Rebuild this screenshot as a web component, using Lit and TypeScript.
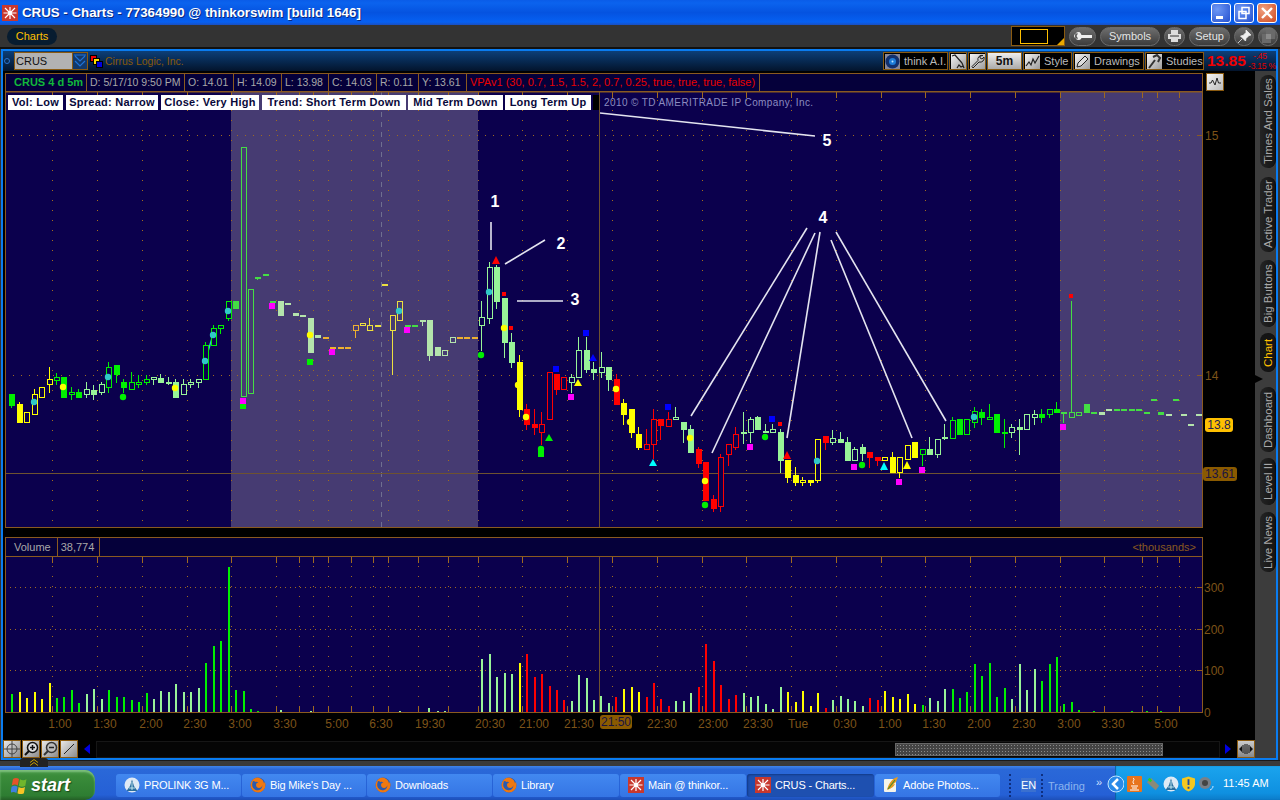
import { LitElement, html, svg, css } from "lit";
import { customElement } from "lit/decorators.js";

// left, body top, body bottom, wick top, wick bottom, kind (upper = filled, lower = hollow)
type Candle = [number, number, number, number, number, string];

const candles: Candle[] = [
  [9, 394, 406, 394, 408, "G"], [17, 404, 423, 402, 423, "Y"], [24, 412, 423, 412, 423, "y"],
  [32, 394, 415, 389, 415, "y"], [39, 387, 398, 387, 398, "y"], [47, 379, 385, 367, 393, "y"],
  [54, 377, 381, 373, 385, "g"], [61, 377, 398, 377, 398, "G"], [69, 392, 395, 387, 400, "g"],
  [76, 392, 398, 389, 398, "G"], [84, 389, 395, 382, 398, "l"], [91, 390, 395, 385, 400, "L"],
  [99, 384, 393, 382, 395, "l"], [106, 367, 388, 362, 393, "g"], [114, 365, 375, 365, 383, "G"],
  [121, 382, 388, 379, 393, "G"], [129, 382, 390, 372, 390, "g"], [136, 382, 385, 375, 388, "g"],
  [144, 379, 383, 375, 385, "g"], [151, 377, 380, 377, 385, "l"], [158, 378, 383, 374, 383, "L"],
  [166, 382, 384, 377, 385, "L"], [173, 382, 398, 379, 398, "L"], [181, 384, 395, 379, 395, "l"],
  [188, 382, 385, 379, 388, "l"], [196, 379, 383, 379, 388, "l"], [203, 345, 380, 342, 380, "g"],
  [211, 328, 346, 325, 346, "g"], [218, 325, 329, 325, 334, "g"], [226, 301, 319, 301, 321, "g"],
  [233, 301, 309, 301, 309, "G"], [241, 147, 397, 147, 397, "g"], [248, 289, 394, 289, 394, "g"],
  [255, 277, 279, 277, 280, "G"], [263, 274, 276, 274, 276, "G"], [270, 301, 303, 301, 303, "G"],
  [278, 301, 316, 301, 316, "L"], [285, 303, 305, 303, 305, "L"], [293, 313, 316, 313, 316, "L"],
  [300, 315, 317, 315, 317, "L"], [308, 318, 353, 318, 353, "L"], [315, 335, 338, 335, 338, "L"],
  [323, 337, 339, 337, 339, "O"], [330, 347, 349, 347, 349, "O"], [338, 347, 349, 347, 349, "O"],
  [345, 347, 349, 347, 349, "O"], [353, 325, 331, 325, 338, "o"], [360, 323, 326, 323, 326, "y"],
  [367, 325, 331, 318, 331, "y"], [375, 325, 327, 325, 327, "Y"], [382, 284, 286, 284, 286, "Y"],
  [390, 315, 331, 315, 375, "y"], [397, 301, 321, 301, 321, "y"], [405, 325, 327, 325, 327, "G"],
  [412, 325, 327, 325, 327, "G"], [420, 320, 322, 320, 326, "L"], [427, 320, 356, 320, 361, "L"],
  [435, 347, 356, 347, 356, "L"], [442, 350, 356, 350, 356, "l"], [450, 337, 343, 337, 343, "l"],
  [457, 337, 339, 337, 339, "O"], [464, 337, 339, 337, 339, "O"], [472, 337, 339, 337, 339, "O"],
  [479, 317, 326, 301, 351, "l"], [487, 267, 319, 262, 324, "l"], [494, 267, 302, 265, 309, "L"],
  [502, 298, 343, 298, 358, "L"], [509, 342, 363, 333, 368, "L"], [517, 362, 410, 355, 417, "Y"],
  [524, 409, 425, 404, 430, "R"], [532, 424, 428, 409, 435, "R"], [539, 424, 433, 412, 445, "r"],
  [547, 372, 420, 372, 420, "r"], [554, 374, 390, 374, 395, "R"], [561, 377, 390, 377, 390, "r"],
  [569, 377, 383, 374, 393, "l"], [576, 350, 378, 337, 378, "l"], [584, 350, 370, 337, 373, "L"],
  [591, 369, 373, 362, 380, "L"], [599, 367, 373, 352, 378, "l"], [606, 367, 380, 367, 391, "L"],
  [614, 379, 405, 374, 405, "R"], [621, 403, 415, 399, 425, "Y"], [629, 409, 433, 409, 438, "Y"],
  [636, 434, 448, 427, 450, "Y"], [644, 444, 450, 429, 450, "r"], [651, 419, 445, 409, 459, "r"],
  [658, 419, 426, 419, 440, "R"], [666, 419, 427, 412, 427, "r"], [673, 417, 420, 407, 420, "l"],
  [681, 422, 430, 422, 443, "L"], [688, 429, 453, 425, 453, "L"], [696, 449, 464, 447, 468, "R"],
  [703, 462, 501, 462, 501, "R"], [711, 499, 509, 495, 512, "R"], [718, 457, 507, 454, 512, "r"],
  [726, 444, 455, 444, 466, "r"], [733, 434, 448, 427, 450, "r"], [741, 432, 434, 412, 444, "L"],
  [748, 419, 433, 417, 443, "l"], [755, 417, 430, 416, 430, "L"], [763, 431, 433, 424, 433, "L"],
  [770, 429, 433, 424, 433, "l"], [778, 432, 461, 429, 473, "L"], [785, 460, 478, 460, 483, "Y"],
  [793, 475, 483, 467, 486, "Y"], [800, 480, 483, 477, 486, "y"], [808, 480, 483, 480, 486, "Y"],
  [815, 439, 481, 439, 483, "y"], [823, 436, 443, 436, 450, "R"], [830, 438, 443, 430, 445, "l"],
  [838, 439, 443, 432, 443, "L"], [845, 442, 461, 437, 461, "L"], [852, 449, 461, 447, 461, "l"],
  [860, 447, 454, 444, 461, "L"], [867, 452, 458, 452, 468, "R"], [875, 457, 461, 457, 466, "R"],
  [882, 457, 461, 457, 461, "y"], [890, 457, 473, 452, 473, "Y"], [897, 457, 473, 457, 478, "y"],
  [905, 445, 460, 445, 460, "y"], [912, 442, 458, 442, 458, "Y"], [920, 449, 455, 449, 466, "g"],
  [927, 449, 455, 437, 455, "L"], [935, 439, 455, 439, 458, "l"], [942, 437, 439, 424, 440, "L"],
  [950, 420, 439, 417, 439, "g"], [957, 419, 435, 419, 435, "G"], [964, 419, 435, 419, 435, "g"],
  [972, 411, 423, 407, 428, "g"], [979, 412, 418, 409, 425, "G"], [987, 417, 420, 404, 420, "g"],
  [994, 414, 433, 414, 433, "G"], [1002, 432, 434, 419, 448, "G"], [1009, 427, 433, 424, 438, "l"],
  [1017, 427, 430, 419, 455, "L"], [1024, 414, 430, 414, 430, "l"], [1032, 414, 418, 410, 425, "l"],
  [1039, 414, 418, 409, 423, "G"], [1047, 409, 415, 409, 418, "g"], [1054, 409, 413, 402, 413, "G"],
  [1061, 412, 414, 412, 423, "G"], [1069, 412, 418, 301, 418, "g"], [1076, 412, 416, 412, 416, "g"],
  [1084, 404, 413, 404, 413, "G"], [1091, 412, 414, 412, 414, "G"], [1099, 412, 415, 412, 415, "L"],
  [1106, 409, 411, 409, 411, "L"], [1114, 409, 411, 409, 411, "G"], [1121, 409, 411, 409, 411, "G"],
  [1129, 409, 411, 409, 411, "G"], [1136, 409, 411, 409, 411, "G"], [1144, 412, 414, 412, 414, "G"],
  [1151, 399, 401, 399, 401, "G"], [1158, 412, 415, 412, 415, "G"], [1166, 414, 416, 414, 416, "L"],
  [1173, 399, 401, 399, 401, "G"], [1181, 414, 416, 414, 416, "L"], [1188, 424, 426, 424, 426, "L"],
  [1196, 414, 416, 414, 416, "L"],
];

const CYAN = "#30c8c8";
const dots: [number, number, string][] = [
  [34, 402, CYAN], [63, 387, "#ffff00"], [108, 377, CYAN], [123, 397, "#00f000"], [175, 388, "#ffff00"],
  [205, 361, CYAN], [213, 335, CYAN], [228, 311, CYAN], [310, 335, "#ffff00"], [399, 311, CYAN],
  [481, 355, "#00f000"], [489, 292, CYAN], [504, 328, "#ffff00"], [518, 385, "#ffff00"],
  [526, 417, "#ffff00"], [541, 449, "#00f000"], [616, 389, "#ffff00"], [630, 422, "#ffff00"],
  [690, 438, "#ffff00"], [705, 481, "#ffff00"], [705, 505, "#00f000"], [765, 437, "#00f000"],
  [817, 461, CYAN], [862, 465, "#00f000"], [974, 417, CYAN],
];

const squares: [number, number, number, number, string][] = [
  [240, 398, 6, 6, "#ff00ff"], [240, 404, 6, 5, "#00f000"], [269, 303, 6, 6, "#ff00ff"],
  [307, 359, 6, 6, "#00f000"], [329, 349, 6, 6, "#ff00ff"], [404, 327, 6, 6, "#ff00ff"],
  [502, 292, 4, 4, "#ff0000"], [509, 326, 4, 4, "#ff0000"], [538, 450, 6, 7, "#00f000"],
  [553, 366, 6, 6, "#0000ff"], [568, 394, 6, 6, "#ff00ff"], [583, 330, 6, 6, "#0000ff"],
  [665, 404, 6, 6, "#0000ff"], [747, 444, 6, 6, "#ff00ff"], [769, 416, 6, 6, "#0000ff"],
  [778, 422, 4, 4, "#ff0000"], [851, 464, 6, 6, "#ff00ff"], [896, 479, 6, 6, "#ff00ff"],
  [919, 467, 6, 6, "#ff00ff"], [1060, 424, 6, 6, "#ff00ff"], [1069, 294, 4, 4, "#ff0000"],
];

const triangles: [number, number, number, string][] = [
  [496, 256, 264, "#ff0000"], [549, 434, 441, "#00f000"], [578, 379, 386, "#ffff00"],
  [593, 354, 361, "#0000ff"], [653, 459, 466, "#00ffff"], [787, 451, 459, "#ff0000"],
  [884, 462, 470, "#00ffff"], [907, 461, 469, "#ffff00"],
];

const notes: [number, number, number, number][] = [
  [491, 222, 491, 250], [505, 264, 545, 240], [517, 301, 563, 301], [600, 113, 815, 136],
  [807, 228, 691, 416], [815, 233, 712, 453], [820, 232, 787, 438], [831, 240, 912, 438], [836, 232, 946, 421],
];

const noteLabels: [string, number, number][] = [
  ["1", 495, 207], ["2", 561, 249], ["3", 575, 305], ["4", 823, 223], ["5", 827, 146],
];

const gridX = [52, 97, 142, 187, 231, 276, 299, 313, 328, 351, 373, 388, 418, 448, 478, 522, 567, 612, 657,
  702, 746, 791, 836, 881, 925, 970, 1015, 1060, 1104, 1142, 1157, 1179];

const timeLabels: [string, number][] = [
  ["1:00", 60], ["1:30", 105], ["2:00", 151], ["2:30", 195], ["3:00", 240], ["3:30", 285], ["5:00", 337],
  ["6:30", 381], ["19:30", 430], ["20:30", 490], ["21:00", 534], ["21:30", 579], ["22:30", 662], ["23:00", 713],
  ["23:30", 758], ["Tue", 798], ["0:30", 845], ["1:00", 890], ["1:30", 934], ["2:00", 979], ["2:30", 1024],
  ["3:00", 1069], ["3:30", 1113], ["5:00", 1166],
];

// volume bars: screen x, top y, colour key
const volumes: [number, number, string][] = [
  [11, 694, "G"], [19, 692, "Y"], [26, 698, "Y"], [34, 692, "Y"], [41, 699, "Y"], [49, 683, "Y"], [56, 698, "G"],
  [63, 697, "G"], [71, 690, "G"], [78, 703, "G"], [86, 694, "L"], [93, 689, "L"], [101, 699, "L"], [108, 690, "G"],
  [116, 697, "G"], [123, 697, "G"], [131, 700, "G"], [138, 702, "G"], [146, 693, "G"], [153, 699, "L"], [160, 691, "L"],
  [168, 692, "L"], [175, 684, "L"], [183, 692, "L"], [190, 692, "L"], [198, 688, "L"], [205, 663, "G"], [213, 646, "G"],
  [220, 641, "G"], [228, 567, "G"], [235, 690, "G"], [243, 691, "G"], [250, 709, "G"], [257, 711, "G"], [280, 710, "L"],
  [310, 711, "L"], [399, 711, "L"], [428, 708, "L"], [437, 711, "L"], [444, 711, "L"], [481, 659, "L"], [489, 654, "L"],
  [496, 677, "L"], [504, 673, "L"], [511, 674, "L"], [519, 663, "Y"], [526, 654, "R"], [534, 677, "R"], [541, 674, "R"],
  [549, 686, "R"], [556, 690, "R"], [563, 700, "R"], [571, 701, "L"], [578, 675, "L"], [586, 678, "L"], [593, 700, "L"],
  [600, 696, "L"], [608, 703, "L"], [615, 697, "R"], [623, 689, "Y"], [631, 687, "Y"], [638, 692, "Y"], [646, 697, "R"],
  [653, 683, "R"], [660, 699, "R"], [668, 706, "R"], [675, 701, "L"], [683, 701, "L"], [690, 693, "L"], [698, 687, "R"],
  [705, 644, "R"], [713, 661, "R"], [720, 685, "R"], [728, 699, "R"], [735, 695, "R"], [743, 693, "L"], [750, 697, "L"],
  [757, 696, "L"], [765, 704, "L"], [772, 709, "L"], [780, 687, "L"], [787, 692, "Y"], [795, 702, "Y"], [802, 691, "Y"],
  [810, 706, "Y"], [817, 693, "Y"], [825, 708, "R"], [832, 700, "L"], [840, 696, "L"], [847, 699, "L"], [854, 701, "L"],
  [862, 706, "L"], [869, 698, "R"], [877, 700, "R"], [884, 691, "Y"], [892, 697, "Y"], [899, 699, "Y"], [907, 694, "Y"],
  [914, 704, "Y"], [922, 705, "G"], [929, 698, "L"], [937, 701, "L"], [944, 689, "L"], [952, 689, "G"], [959, 698, "G"],
  [966, 692, "G"], [974, 664, "G"], [981, 676, "G"], [989, 663, "G"], [996, 697, "G"], [1004, 688, "G"], [1011, 699, "L"],
  [1019, 664, "L"], [1026, 690, "L"], [1034, 669, "L"], [1041, 681, "G"], [1049, 664, "G"], [1056, 657, "G"],
  [1063, 704, "G"], [1071, 702, "G"], [1078, 710, "G"], [1093, 711, "G"], [1131, 711, "G"], [1146, 711, "G"], [1160, 711, "G"],
];

const tabs: [string, number, number][] = [
  ["Times And Sales", 4, 93], ["Active Trader", 9, 75], ["Big Buttons", 8, 67], ["Chart", 6, 39],
  ["Dashboard", 15, 65], ["Level II", 6, 47], ["Live News", 7, 60],
];

const vpaLabels: [string, number][] = [
  ["Vol: Low", 55], ["Spread: Narrow", 92], ["Close: Very High", 98],
  ["Trend: Short Term Down", 144], ["Mid Term Down", 95], ["Long Term Up", 86],
];

const quotes: [string, number][] = [
  ["D: 5/17/10 9:50 PM", 98], ["O: 14.01", 49], ["H: 14.09", 48], ["L: 13.98", 47],
  ["C: 14.03", 48], ["R: 0.11", 42], ["Y: 13.61", 48],
];

function inShade(x: number) {
  return (x >= 231 && x < 478) || x >= 1060;
}

function colourFor(kind: string, x: number) {
  const k = kind.toUpperCase();
  const shaded = inShade(x);
  if (k === "G") return shaded ? "#44dd44" : "#00f000";
  if (k === "L") return shaded ? "#b4e4ac" : "#98f498";
  if (k === "Y") return shaded ? "#ece040" : "#ffff00";
  if (k === "O") return "#eeb030";
  return "#ff0000";
}

function candleMark([x, top, bottom, wt, wb, kind]: Candle) {
  const c = colourFor(kind, x);
  const hollow = kind === kind.toLowerCase();
  return svg`
    <line x1=${x + 2.5} x2=${x + 2.5} y1=${wt} y2=${wb} stroke=${c} />
    ${hollow
      ? svg`<rect x=${x + 0.5} y=${top + 0.5} width="5" height=${bottom - top - 1} fill=${inShade(x) ? "#463b72" : "#0b004d"} stroke=${c} />`
      : svg`<rect x=${x} y=${top} width="6" height=${bottom - top} fill=${c} />`}
  `;
}

const tosIcon = svg`
  <rect x="0" y="0" width="16" height="16" fill="#c8382e" />
  <path d="M8 2v12M3 3l10 10M13 3L3 13M1.500 8h13" stroke="#fff" stroke-width="1.200" />
  <circle cx="8" cy="8" r="2" fill="#fff" />`;

const firefoxIcon = svg`
  <circle cx="8" cy="8" r="7.500" fill="#2a5ab0" />
  <path d="M8 .5a7.500 7.500 0 1 0 7.500 7.500c0-1.200-.3-2.300-.8-3.300-.2 1.300-.8 1.800-.8 1.800C13.800 4 12 1.500 8 .5zM3 4c1 .1 1.800.5 2.500 1 1-.3 2-.2 3 .5-1.500 0-2.500 1-2.500 2.500 0 1.800 1.500 3 3 3 1.800 0 3-1.300 3.300-2.800.3 2.800-1.800 5-4.800 5-3.200 0-5.300-2.500-5.300-5.200 0-1.500.4-3 .8-4z" fill="#f07810" />`;

const prolinkIcon = svg`
  <circle cx="8" cy="8" r="7.500" fill="#dfeaf5" />
  <path d="M8 2.500L10 9l3.500 5h-11L6 9z" fill="#2a6d9e" />
  <path d="M8 5v8M5 11h6" stroke="#dff" stroke-width=".8" />`;

const photoshopIcon = svg`
  <rect x="1" y="2" width="12" height="13" rx="1" fill="#f4f4ea" />
  <path d="M15 0C10 1 6 5 4 13c3-1 7-3 8-6l-2 .5L13 5z" fill="#e69a20" />
  <path d="M12 3L5 12" stroke="#4a8a2c" stroke-width="1.200" />`;

const windowsFlag = svg`
  <path d="M2 3c2-1.500 4-1.500 6 0l-1.200 6.500c-2-1.400-4-1.400-6 0z" fill="#e5532a" />
  <path d="M9 3.300c2 1.300 4 1.300 6.500 0L14.300 9.800c-2.300 1.300-4.500 1.300-6.500 0z" fill="#6fb62c" />
  <path d="M.6 10.800c2-1.400 4-1.400 6 0L5.400 17c-2-1.400-4-1.400-6 0z" fill="#3f80e0" />
  <path d="M7.600 11c2 1.300 4.300 1.300 6.400 0l-1.100 6.200c-2.200 1.300-4.400 1.300-6.400 0z" fill="#f7c325" />`;

@customElement("app-root")
export class AppRoot extends LitElement {
  static override styles = css`
    :host {
      display: flex;
      flex-direction: column;
      position: relative;
      width: 1280px;
      height: 800px;
      overflow: hidden;
      background: #333;
      font-family: "Liberation Sans", Arial, sans-serif;
    }

    svg { display: block; }

    .title-bar {
      height: 25px;
      flex: none;
      display: flex;
      align-items: center;
      padding: 0 3px 0 2px;
      background: linear-gradient(#0a5ce8 0%, #0b63ee 12%, #0553e0 50%, #0660f2 88%, #1a4fc0 100%);
      color: #fff;
      font: bold 13.3px "Liberation Sans", sans-serif;
      text-shadow: 1px 1px 0 #0a2a80;
    }
    .title-text { flex: 1; margin-left: 4px; }
    .win-btn {
      width: 20px;
      height: 20px;
      box-sizing: border-box;
      margin-left: 3px;
      border: 1px solid #fff;
      border-radius: 3px;
      background: radial-gradient(circle at 30% 30%, #6e98f5, #2450d0);
    }
    .win-btn.close { background: radial-gradient(circle at 30% 30%, #f0a080, #d04a20); }

    .menu-bar {
      height: 22px;
      flex: none;
      display: flex;
      align-items: center;
      padding: 0 2px 0 7px;
      background: #333;
    }
    .charts-pill {
      width: 50px;
      height: 17px;
      border-radius: 9px;
      background: #071c30;
      color: #ffc000;
      font-size: 11px;
      line-height: 17px;
      text-align: center;
    }
    .menu-fill { flex: 1; }
    .color-box {
      position: relative;
      width: 52px;
      height: 18px;
      margin-right: 4px;
      background: #000;
      border: 1px solid #8a5a10;
    }
    .color-box i {
      position: absolute;
      left: 8px;
      top: 2px;
      width: 26px;
      height: 13px;
      border: 1px solid #ffc000;
    }
    .color-box b {
      position: absolute;
      right: 0;
      bottom: 0;
      border-style: solid;
      border-width: 0 0 7px 7px;
      border-color: transparent transparent #e8a800 transparent;
    }
    .pill {
      height: 17px;
      margin-right: 4px;
      border: 1px solid #6c6c6c;
      border-radius: 10px;
      background: linear-gradient(#6e6e6e, #3c3c3c);
      color: #e4e4e4;
      font-size: 11px;
      line-height: 17px;
      text-align: center;
      display: flex;
      align-items: center;
      justify-content: center;
      box-sizing: content-box;
    }
    .pill.last { margin-right: 0; }

    .black-line { height: 2px; flex: none; background: #111; }

    .panel {
      height: 707px;
      flex: none;
      margin: 0 2px 0 1px;
      border: 2px solid #0a7cf0;
      display: flex;
      flex-direction: column;
      background: #000;
    }
    .panel-head {
      height: 20px;
      flex: none;
      display: flex;
      align-items: center;
      background: linear-gradient(#0c3f78, #03142c);
    }
    .live-dot {
      width: 4px;
      height: 4px;
      margin: 0 4px 0 1px;
      border: 1px solid #2a74d0;
      border-radius: 50%;
    }
    .symbol {
      width: 56px;
      height: 16px;
      border: 1px solid #8a5a10;
      background: #b2b2b2;
      color: #111;
      font-size: 11px;
      line-height: 16px;
      padding-left: 1px;
      box-sizing: content-box;
    }
    .symbol-drop {
      width: 14px;
      height: 16px;
      border: 1px solid #8a5a10;
      border-left: none;
      background: #12386a;
      margin-right: 2px;
    }
    .company { flex: 1; margin-left: 2px; color: #8a5a0a; font-size: 10.5px; }
    .tools { display: flex; height: 18px; }
    .tool {
      display: flex;
      align-items: center;
      gap: 4px;
      box-sizing: border-box;
      height: 18px;
      margin-right: 1px;
      padding: 0 1px;
      border: 1px solid #8a5a10;
      background: #000;
      color: #bbb;
      font-size: 11px;
      white-space: nowrap;
    }
    .glyph {
      width: 15px;
      height: 15px;
      flex: none;
      background: linear-gradient(135deg, #f4f4f4, #9c9c9c);
    }
    .tool.fivem {
      justify-content: center;
      background: linear-gradient(#eee, #aaa);
      color: #111;
      font-weight: bold;
      font-size: 12px;
    }
    .last-price {
      width: 41px;
      margin-left: 3px;
      color: #f00000;
      font-size: 15.5px;
      font-weight: bold;
      white-space: nowrap;
    }
    .change {
      width: 28px;
      color: #e00000;
      font-size: 8.5px;
      letter-spacing: -0.2px;
      line-height: 10px;
      white-space: nowrap;
    }

    .panel-body { flex: 1; display: flex; min-height: 0; }
    .chart-col { width: 1252px; flex: none; display: flex; flex-direction: column; }

    .info-row { display: flex; height: 19px; flex: none; margin: 2px 0 0 2px; }
    .info {
      width: 1198px;
      display: flex;
      box-sizing: border-box;
      height: 19px;
      border: 1px solid #8a5a20;
      background: #05003a;
      color: #a8a8a8;
      font-size: 10.5px;
      line-height: 17px;
    }
    .info span { box-sizing: border-box; padding-left: 3px; border-right: 1px solid #8a5a20; white-space: nowrap; }
    .info .sym { width: 81px; color: #12b83a; font-weight: bold; font-size: 11px; padding-left: 8px; }
    .info .study { width: 293px; color: #e80000; font-size: 11px; border-right: 1px solid #8a5a20; }
    .chart-toggle {
      width: 16px;
      height: 16px;
      margin: 0 0 0 3px;
      border: 1px solid #8a5a10;
      padding: 0;
      background: linear-gradient(135deg, #f4f4f4, #bbb);
    }

    .price-wrap { position: relative; margin-left: 2px; height: 436px; flex: none; }
    .overlay {
      position: absolute;
      left: 3px;
      top: 3px;
      display: flex;
      align-items: center;
      height: 15px;
    }
    .tag {
      height: 15px;
      margin-right: 3px;
      background: #fff;
      color: #08083a;
      font-size: 11px;
      font-weight: bold;
      line-height: 15px;
      text-align: center;
      letter-spacing: 0.25px;
      white-space: nowrap;
    }
    .tag.tight { margin-right: 2px; }
    .tag-end { width: 6px; height: 15px; margin: 0 5px 0 -1px; background: #000; }
    .copyright { color: #8c8cc0; font-size: 10px; letter-spacing: 0.4px; white-space: nowrap; }

    .vol-head {
      position: relative;
      width: 1198px;
      height: 20px;
      margin: 9px 0 0 2px;
      box-sizing: border-box;
      flex: none;
      display: flex;
      border: 1px solid #8a5a20;
      background: #05003a;
      color: #a8a8a8;
      font-size: 11px;
      line-height: 18px;
    }
    .vol-head span { padding: 0 6px 0 8px; border-right: 1px solid #8a5a20; }
    .vol-head span + span { padding: 0 5px 0 3px; }
    .vol-head em {
      margin-left: auto;
      padding-right: 6px;
      color: #8a5a20;
      font-style: normal;
    }
    .vol-wrap { margin-left: 2px; height: 178px; flex: none; }

    .scroll-row { display: flex; align-items: center; height: 18px; margin-top: 5px; flex: none; }
    .sq-btn {
      width: 16px;
      height: 16px;
      margin-right: 1px;
      flex: none;
      border: 1px solid #8a5a10;
      background: linear-gradient(135deg, #e8e8e8, #8c8c8c);
    }
    .arrow { width: 6px; height: 10px; margin: 0 6px 0 5px; flex: none; }
    .track {
      position: relative;
      flex: 1;
      height: 15px;
      background: #050505;
      border: 1px solid #161616;
    }
    .thumb {
      position: absolute;
      left: 798px;
      top: 1px;
      width: 268px;
      height: 13px;
      border: 1px solid #666;
      box-sizing: border-box;
      background: #444;
      background-image: radial-gradient(#8a8a8a 0.7px, transparent 0.8px);
      background-size: 3px 3px;
    }

    .tab-strip {
      position: relative;
      width: 21px;
      flex: none;
      display: flex;
      flex-direction: column;
      align-items: flex-end;
      background: #3c3c3c;
    }
    .side-tab {
      width: 16px;
      box-sizing: border-box;
      border-radius: 8px;
      background: linear-gradient(90deg, #141414, #242424);
      border-left: 1px solid #0c0c0c;
      color: #a8a8a8;
      font-size: 11.5px;
      display: flex;
      align-items: center;
      justify-content: center;
      writing-mode: vertical-rl;
      transform: rotate(180deg);
      white-space: nowrap;
    }
    .side-tab.active { color: #ffc000; background: #141414; }
    .notch {
      position: absolute;
      left: 0;
      top: 304px;
      border-style: solid;
      border-width: 4px 0 4px 8px;
      border-color: transparent transparent transparent #000;
    }

    .under-panel { position: relative; height: 6px; flex: none; background: #3a3a3a; border-top: 1px solid #1a1a1a; box-sizing: border-box; }
    .handle {
      position: absolute;
      left: 20px;
      top: -3px;
      width: 28px;
      height: 9px;
      border-radius: 3px 3px 0 0;
      background: #222;
    }
    .handle svg { margin: 1px auto 0; }

    .taskbar {
      height: 34px;
      flex: none;
      display: flex;
      align-items: flex-end;
      background: linear-gradient(#3f84ea 0%, #2a68d8 10%, #2560d6 85%, #1d4fb8 100%);
      color: #fff;
      font-size: 11px;
    }
    .start {
      width: 95px;
      height: 30px;
      flex: none;
      display: flex;
      align-items: center;
      gap: 4px;
      box-sizing: border-box;
      padding-left: 11px;
      border-radius: 0 10px 10px 0;
      background: linear-gradient(#4a9a4a, #3a8c3a 20%, #2e7d32 85%, #245f26);
      box-shadow: inset 0 2px 2px #7ec07e;
      font-size: 18px;
      font-style: italic;
      font-weight: bold;
      text-shadow: 1px 1px 1px #1a4a1a;
    }
    .grip { width: 3px; height: 23px; margin: 0 0 3px; flex: none; border-left: 2px dotted #0e2f80; box-sizing: border-box; }
    .tasks { display: flex; height: 30px; align-items: center; margin-left: 21px; }
    .task {
      display: flex;
      align-items: center;
      gap: 4px;
      box-sizing: border-box;
      height: 23px;
      margin-right: 1px;
      padding-left: 8px;
      border-radius: 3px;
      background: linear-gradient(#4288f0, #3575e4);
      letter-spacing: -0.15px;
      white-space: nowrap;
      overflow: hidden;
    }
    .task.active { background: #1e50b0; box-shadow: inset 1px 1px 2px #123a88; }
    .lang { width: 15px; margin: 0 0 8px 9px; background: #3a70d0; font-size: 11px; line-height: 14px; text-align: center; }
    .toolbar-name { width: 36px; margin: 0 0 8px 4px; color: #8cb4ee; font-size: 11px; }
    .more { margin: 0 0 12px 12px; color: #cfe0ff; font-size: 11px; width: 19px; }
    .tray {
      flex: 1;
      height: 34px;
      display: flex;
      align-items: center;
      gap: 3px;
      background: linear-gradient(#1aa4ee, #0f90e0 80%, #0c7bc8);
      box-shadow: inset 1px 0 1px #0b5fa0;
      font-size: 11px;
    }
    .tray .clock { margin-left: 6px; white-space: nowrap; }
    .tray svg { margin-top: 2px; flex: none; }
  `;

  renderPrice() {
    return svg`
      <rect x="5" y="92" width="1198" height="436" fill="#0b004d" />
      <rect x="231" y="92" width="247" height="435" fill="#463b72" />
      <rect x="1060" y="92" width="143" height="435" fill="#463b72" />
      <g stroke="#a06a20" shape-rendering="crispEdges">
        ${gridX.map((x) => svg`<line x1=${x + 0.5} x2=${x + 0.5} y1="92" y2="98" />
          <line x1=${x + 0.5} x2=${x + 0.5} y1="100" y2="527" stroke-dasharray="1 9" />`)}
        <line x1="5" x2="1203" y1="135.500" y2="135.500" stroke-dasharray="1 7" />
        <line x1="5" x2="1203" y1="375.500" y2="375.500" stroke-dasharray="1 7" />
      </g>
      <line x1="381.500" x2="381.500" y1="92" y2="527" stroke="#6f6f90" stroke-dasharray="5 5" />
      <g stroke="#6e5230" shape-rendering="crispEdges">
        <line x1="5" x2="1203" y1="473.500" y2="473.500" />
        <line x1="599.500" x2="599.500" y1="92" y2="527" />
      </g>
      <line x1="205" y1="361" x2="213" y2="335" stroke=${CYAN} stroke-width="1.500" />
      <g shape-rendering="crispEdges">${candles.map(candleMark)}</g>
      ${dots.map(([x, y, c]) => svg`<circle cx=${x} cy=${y} r="3.200" fill=${c} />`)}
      <g shape-rendering="crispEdges">
        ${squares.map(([x, y, w, h, c]) => svg`<rect x=${x} y=${y} width=${w} height=${h} fill=${c} />`)}
      </g>
      ${triangles.map(([x, t, b, c]) => svg`<path d="M${x} ${t}L${x + 4} ${b}H${x - 4}z" fill=${c} />`)}
      ${notes.map(([a, b, c, d]) => svg`<line x1=${a} y1=${b} x2=${c} y2=${d} stroke="#e4e4f0" stroke-width="1.600" />`)}
      ${noteLabels.map(([t, x, y]) => svg`<text x=${x} y=${y} text-anchor="middle" fill="#fff" font-size="16" font-weight="bold">${t}</text>`)}
      <rect x="5.500" y="92" width="1197" height="435.500" fill="none" stroke="#8a5a20" />
      <g stroke="#8a5a20" shape-rendering="crispEdges">
        <line x1="1197" x2="1203" y1="135.500" y2="135.500" />
        <line x1="1197" x2="1203" y1="375.500" y2="375.500" />
      </g>
      <g fill="#7d5318" font-size="12">
        <text x="1205" y="140">15</text>
        <text x="1205" y="380">14</text>
      </g>
      <rect x="1205" y="418" width="28" height="14" rx="3" fill="#ffc000" />
      <text x="1219" y="429" text-anchor="middle" font-size="12" fill="#222050">13.8</text>
      <rect x="1203" y="467" width="34" height="14" rx="3" fill="#8a5a00" />
      <text x="1220" y="478" text-anchor="middle" font-size="12" fill="#1a1440">13.61</text>
    `;
  }

  renderVolume() {
    return svg`
      <rect x="5" y="557" width="1198" height="155" fill="#0b004d" />
      <g stroke="#a06a20" shape-rendering="crispEdges">
        ${gridX.map((x) => svg`<line x1=${x + 0.5} x2=${x + 0.5} y1="557" y2="563" />
          <line x1=${x + 0.5} x2=${x + 0.5} y1="566" y2="707" stroke-dasharray="1 9" />
          <line x1=${x + 0.5} x2=${x + 0.5} y1="707" y2="712" />`)}
        <line x1="5" x2="1197" y1="587.500" y2="587.500" stroke-dasharray="1 4" />
        <line x1="5" x2="1197" y1="629.500" y2="629.500" stroke-dasharray="1 4" />
        <line x1="5" x2="1197" y1="670.500" y2="670.500" stroke-dasharray="1 4" />
      </g>
      <line x1="599.500" x2="599.500" y1="557" y2="712" stroke="#6e5230" shape-rendering="crispEdges" />
      <g shape-rendering="crispEdges">
        ${volumes.map(([x, y, k]) => svg`<rect x=${x} y=${y} width="2" height=${712 - y} fill=${colourFor(k, 500)} />`)}
      </g>
      <path d="M5.500 557V712.500H1202.500V557" fill="none" stroke="#8a5a20" shape-rendering="crispEdges" />
      <g stroke="#8a5a20" shape-rendering="crispEdges">
        <line x1="1197" x2="1203" y1="587.500" y2="587.500" />
        <line x1="1197" x2="1203" y1="629.500" y2="629.500" />
        <line x1="1197" x2="1203" y1="670.500" y2="670.500" />
      </g>
      <g fill="#7d5318" font-size="12">
        <text x="1204" y="592">300</text>
        <text x="1204" y="634">200</text>
        <text x="1204" y="675">100</text>
        <text x="1204" y="717">0</text>
        ${timeLabels.map(([t, x]) => svg`<text x=${x} y="728" text-anchor="middle">${t}</text>`)}
      </g>
      <rect x="600" y="715" width="32" height="14" rx="3" fill="#8a5a00" />
      <text x="616" y="726" text-anchor="middle" font-size="12" fill="#1a1440">21:50</text>
    `;
  }

  renderTitle() {
    return html`
      <div class="title-bar">
        <svg width="16" height="16" viewBox="0 0 16 16">${tosIcon}</svg>
        <div class="title-text">CRUS - Charts - 77364990 @ thinkorswim [build 1646]</div>
        <div class="win-btn">
          <svg width="18" height="18" viewBox="0 0 18 18"><rect x="4" y="12" width="7" height="3" fill="#fff" /></svg>
        </div>
        <div class="win-btn">
          <svg width="18" height="18" viewBox="0 0 18 18">
            <path d="M7 3.500h7v6h-7zM4 7.500h7v7H4z" fill="none" stroke="#fff" stroke-width="1.500" />
          </svg>
        </div>
        <div class="win-btn close">
          <svg width="18" height="18" viewBox="0 0 18 18">
            <path d="M4 4l10 10M14 4L4 14" stroke="#fff" stroke-width="2.400" />
          </svg>
        </div>
      </div>
    `;
  }

  renderMenu() {
    return html`
      <div class="menu-bar">
        <div class="charts-pill">Charts</div>
        <div class="menu-fill"></div>
        <div class="color-box"><i></i><b></b></div>
        <div class="pill" style="width:25px">
          <svg width="20" height="10" viewBox="0 0 20 10">
            <path d="M6 1a4 4 0 1 0 0 8c1 0 2-.8 2.500-2H19V4H8.500C8 2.500 7 1 6 1zM1 5a3 3 0 0 1 4-2.500L3.500 5 5 7.500A3 3 0 0 1 1 5z" fill="#eee" fill-rule="evenodd" />
          </svg>
        </div>
        <div class="pill" style="width:58px">Symbols</div>
        <div class="pill" style="width:19px">
          <svg width="13" height="12" viewBox="0 0 13 12">
            <path d="M3 0h7v4H3zM0 4h13v5H0zM3 8h7v4H3z" fill="#ddd" />
            <path d="M2 6h9" stroke="#333" />
          </svg>
        </div>
        <div class="pill" style="width:39px">Setup</div>
        <div class="pill" style="width:18px">
          <svg width="13" height="13" viewBox="0 0 13 13">
            <path d="M8 0l5 5-2 .5-3 3-.5 2.500L2.500 6 5 5.500l3-3zM4 9l-4 4" fill="#eee" stroke="#eee" stroke-width=".8" />
          </svg>
        </div>
        <div class="pill last" style="width:18px">
          <svg width="13" height="13" viewBox="0 0 13 13">
            <path d="M4 0h9v9H9v4H0V4h4z" fill="#6a6a6a" />
            <path d="M4 4h5v5H4z" fill="#8a8a8a" />
          </svg>
        </div>
      </div>
    `;
  }

  renderHead() {
    return html`
      <div class="panel-head">
        <div class="live-dot"></div>
        <div class="symbol">CRUS</div>
        <div class="symbol-drop">
          <svg width="14" height="16" viewBox="0 0 14 16">
            <path d="M1 2h12M2 3l5 5 5-5M2 8l5 5 5-5" fill="none" stroke="#1e72d8" stroke-width="1.200" />
          </svg>
        </div>
        <svg width="13" height="13" viewBox="0 0 13 13">
          <rect x=".5" y=".5" width="6" height="6" fill="#f00000" stroke="#000" />
          <rect x="3.500" y="3.500" width="6" height="6" fill="#ffe000" stroke="#000" />
          <rect x="6.500" y="6.500" width="6" height="6" fill="#0000e0" stroke="#000" />
        </svg>
        <div class="company">Cirrus Logic, Inc.</div>
        <div class="tools">
          <div class="tool" style="width:65px">
            <svg class="glyph" viewBox="0 0 15 15">
              <rect width="15" height="15" fill="#889" />
              <circle cx="7.500" cy="7.500" r="7" fill="#12306e" />
              <circle cx="7.500" cy="7.500" r="3.500" fill="#1e7cd8" />
              <circle cx="7.500" cy="7.500" r="1" fill="#bfe6ff" />
            </svg>
            think A.I.
          </div>
          <div class="tool" style="width:18px">
            <svg class="glyph" viewBox="0 0 15 15">
              <path d="M1 2l3-1 7 8M6 14l2-3 2 2 2-1 1 2-2-5" fill="none" stroke="#222" stroke-width="1.200" />
            </svg>
          </div>
          <div class="tool" style="width:18px">
            <svg class="glyph" viewBox="0 0 15 15">
              <path d="M13 1.500a4 4 0 0 0-5 5L2 12.500 3 14l6-6a4 4 0 0 0 5-5l-2 2-2-1V2z" fill="none" stroke="#222" />
            </svg>
          </div>
          <div class="tool fivem" style="width:35px">5m</div>
          <div class="tool" style="width:49px">
            <svg class="glyph" viewBox="0 0 15 15">
              <path d="M1 12l3-4 2 3 2-6 2 4 4-7" fill="none" stroke="#222" stroke-width="1.200" />
            </svg>
            Style
          </div>
          <div class="tool" style="width:71px">
            <svg class="glyph" viewBox="0 0 15 15">
              <path d="M2 13l1-4 7-7 3 3-7 7z" fill="#ddd" stroke="#222" />
            </svg>
            Drawings
          </div>
          <div class="tool" style="width:59px;margin-right:0">
            <svg class="glyph" viewBox="0 0 15 15">
              <path d="M2 14l6-8M6 3l4-2 3 3-2 4" fill="none" stroke="#333" stroke-width="2" />
            </svg>
            Studies
          </div>
        </div>
        <div class="last-price">13.85</div>
        <div class="change"><div style="margin-left:5px">-.45</div><div>-3.15 %</div></div>
      </div>
    `;
  }

  renderChart() {
    return html`
      <div class="chart-col">
        <div class="info-row">
          <div class="info">
            <span class="sym">CRUS 4 d 5m</span>
            ${quotes.map(([t, w]) => html`<span style="width:${w}px">${t}</span>`)}
            <span class="study">VPAv1 (30, 0.7, 1.5, 1.5, 2, 0.7, 0.25, true, true, true, false)</span>
          </div>
          <div class="chart-toggle">
            <svg width="16" height="16" viewBox="0 0 16 16">
              <path d="M2 9h2l1.500-3L8 11l2-7 1.500 5H14" fill="none" stroke="#222" />
            </svg>
          </div>
        </div>
        <div class="price-wrap">
          <svg width="1250" height="436" viewBox="5 92 1250 436">${this.renderPrice()}</svg>
          <div class="overlay">
            ${vpaLabels.map(([t, w], i) => html`<div class="tag ${i > 2 && i < 5 ? "tight" : ""}" style="width:${w}px">${t}</div>`)}
            <div class="tag-end"></div>
            <div class="copyright">2010 © TD AMERITRADE IP Company, Inc.</div>
          </div>
        </div>
        <div class="vol-head">
          <span>Volume</span><span>38,774</span>
          <em>&lt;thousands&gt;</em>
        </div>
        <div class="vol-wrap">
          <svg width="1250" height="178" viewBox="5 557 1250 178">${this.renderVolume()}</svg>
        </div>
        <div class="scroll-row">
          <div class="sq-btn">
            <svg width="16" height="16" viewBox="0 0 16 16">
              <circle cx="8" cy="8" r="5" fill="none" stroke="#444" />
              <path d="M8 0v16M0 8h16" stroke="#444" />
            </svg>
          </div>
          <div class="sq-btn">
            <svg width="16" height="16" viewBox="0 0 16 16">
              <circle cx="9.500" cy="6.500" r="5" fill="#ddd" stroke="#111" stroke-width="1.500" />
              <path d="M7 6.500h5M9.500 4v5" stroke="#111" stroke-width="1.500" />
              <path d="M6 10l-4 4" stroke="#111" stroke-width="2" />
            </svg>
          </div>
          <div class="sq-btn">
            <svg width="16" height="16" viewBox="0 0 16 16">
              <circle cx="9.500" cy="6.500" r="5" fill="#bbb" stroke="#333" stroke-width="1.500" />
              <path d="M7 6.500h5" stroke="#222" stroke-width="1.500" />
              <path d="M6 10l-4 4" stroke="#333" stroke-width="2" />
            </svg>
          </div>
          <div class="sq-btn">
            <svg width="16" height="16" viewBox="0 0 16 16"><path d="M3 13L13 3" stroke="#222" /></svg>
          </div>
          <svg class="arrow" viewBox="0 0 6 10"><path d="M6 0v10L0 5z" fill="#0000e0" /></svg>
          <div class="track"><div class="thumb"></div></div>
          <svg class="arrow" viewBox="0 0 6 10"><path d="M0 0v10l6-5z" fill="#0000e0" /></svg>
          <div class="sq-btn" style="margin-right:0;background:linear-gradient(#ccc,#888)">
            <svg width="16" height="16" viewBox="0 0 16 16">
              <path d="M5 4v8M7 3v10M9 3v10M11 4v8" stroke="#111" />
              <path d="M4 5L1 8l3 3M12 5l3 3-3 3" fill="#111" />
            </svg>
          </div>
        </div>
      </div>
    `;
  }

  renderTabs() {
    return html`
      <div class="tab-strip">
        ${tabs.map(([t, gap, h]) => html`
          <div class="side-tab ${t === "Chart" ? "active" : ""}" style="margin-top:${gap}px;height:${h}px">${t}</div>
        `)}
        <div class="notch"></div>
      </div>
    `;
  }

  renderTaskbar() {
    const tasks: [string, number, unknown, boolean?][] = [
      ["PROLINK 3G M...", 125, prolinkIcon],
      ["Big Mike's Day ...", 124, firefoxIcon],
      ["Downloads", 125, firefoxIcon],
      ["Library", 126, firefoxIcon],
      ["Main @ thinkor...", 126, tosIcon],
      ["CRUS - Charts...", 127, tosIcon, true],
      ["Adobe Photos...", 125, photoshopIcon],
    ];
    return html`
      <div class="taskbar">
        <div class="start">
          <svg width="16" height="18" viewBox="0 0 16 18">${windowsFlag}</svg>
          start
        </div>
        <div class="tasks">
          ${tasks.map(([t, w, icon, active]) => html`
            <div class="task ${active ? "active" : ""}" style="width:${w}px">
              <svg width="16" height="16" viewBox="0 0 16 16" style="flex:none">${icon}</svg>${t}
            </div>
          `)}
        </div>
        <div class="grip" style="margin-left:8px"></div>
        <div class="lang">EN</div>
        <div class="grip" style="margin-left:5px"></div>
        <div class="toolbar-name">Trading</div>
        <div class="more">»</div>
        <div class="tray">
          <svg width="17" height="24" viewBox="0 0 17 24" style="margin-left:-8px">
            <circle cx="9" cy="12" r="8" fill="#2a8ae8" stroke="#bfe4ff" />
            <path d="M11 7l-5 5 5 5" fill="none" stroke="#fff" stroke-width="2.500" />
          </svg>
          <svg width="16" height="16" viewBox="0 0 16 16">
            <rect width="15" height="16" rx="1" fill="#e8741c" />
            <path d="M6 2c3 2-2 3 1 6M4 10h7M5 12h5M3 14h9" fill="none" stroke="#fff" />
          </svg>
          <svg width="14" height="16" viewBox="0 0 16 16">
            <path d="M1 6l5-5 9 9-4 5z" fill="#8a8a78" />
            <path d="M3 2l3 3" stroke="#2ad02a" stroke-width="3" />
          </svg>
          <svg width="16" height="16" viewBox="0 0 16 16">${prolinkIcon}</svg>
          <svg width="13" height="16" viewBox="0 0 14 16">
            <path d="M7 0l7 2v6c0 4-4 7-7 8-3-1-7-4-7-8V2z" fill="#f4c820" />
            <path d="M7 3v6M7 11v2" stroke="#1e4aa0" stroke-width="2" />
          </svg>
          <svg width="16" height="16" viewBox="0 0 16 16">
            <circle cx="7" cy="7" r="6" fill="#7a8088" />
            <circle cx="7" cy="7" r="3" fill="#444" />
            <path d="M12 14c2-1 3-2 3-4" fill="none" stroke="#d8e8ff" />
          </svg>
          <span class="clock">11:45 AM</span>
        </div>
      </div>
    `;
  }

  override render() {
    return html`
      ${this.renderTitle()}
      ${this.renderMenu()}
      <div class="black-line"></div>
      <div class="panel">
        ${this.renderHead()}
        <div class="panel-body">
          ${this.renderChart()}
          ${this.renderTabs()}
        </div>
      </div>
      <div class="under-panel">
        <div class="handle">
          <svg width="10" height="7" viewBox="0 0 10 7">
            <path d="M1 3.500L5 .5l4 3M1 6.500l4-3 4 3" fill="none" stroke="#c8a000" />
          </svg>
        </div>
      </div>
      ${this.renderTaskbar()}
    `;
  }
}
